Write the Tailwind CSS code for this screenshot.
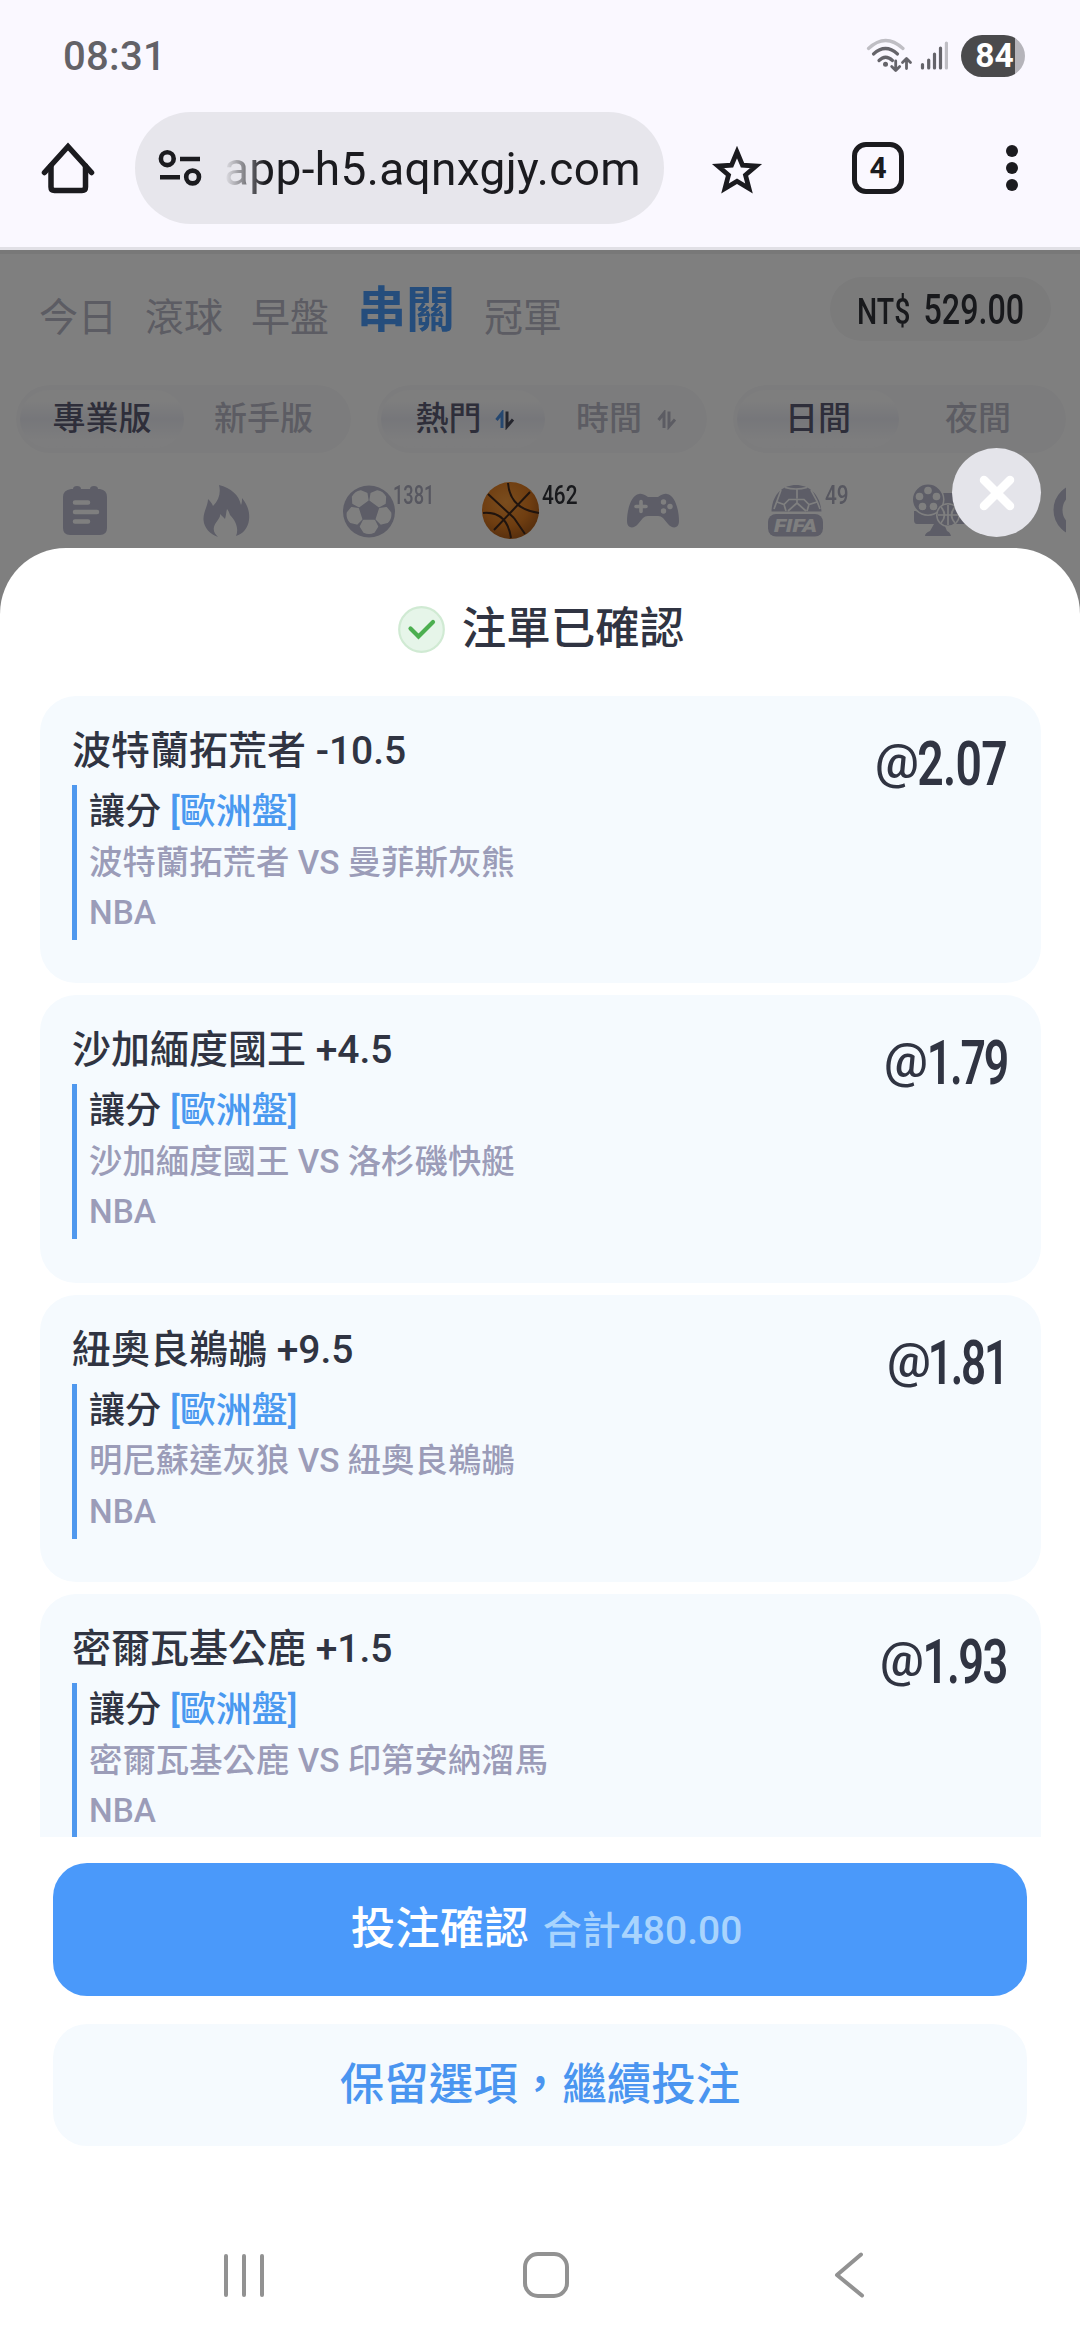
<!DOCTYPE html>
<html lang="zh-Hant">
<head>
<meta charset="utf-8">
<title>注單已確認</title>
<script src="https://cdn.jsdelivr.net/npm/@tailwindcss/browser@4"></script>
</head>
<body class="bg-white">
<div class="flex h-[2340px] w-[1080px] flex-col overflow-hidden bg-white font-['Roboto','Noto_Sans_CJK_TC',sans-serif] font-medium text-[#303442]">

  <!-- Status bar and browser toolbar -->
  <header class="flex h-[250px] flex-none flex-col border-b-3 border-[#e1e0e6] bg-[#faf8ff]">
    <div class="flex h-[112px] items-center justify-between pl-[63px] pr-[55px]">
      <span class="pt-[2px] text-[40px] leading-[42px] tracking-[0.3px] text-[#636267]">08:31</span>
      <div class="flex items-center">
        <svg class="h-[42px] w-[96px]" viewBox="864 35 96 42" fill="none" stroke="#65646a" stroke-width="3.2" stroke-linecap="round" stroke-linejoin="round">
          <path stroke="#bfbec4" d="M867.5 48.500Q884.500 32.500 902 48.500"/>
          <path d="M872.500 54Q884.500 43 896.500 54"/>
          <path d="M878 60.500Q884.500 54 891.500 60.500"/>
          <circle cx="884.500" cy="64.300" r="2.500" fill="#65646a" stroke="none"/>
          <path stroke-width="2.800" d="M894.700 61V70M890.700 66.500L894.700 70.500L898.700 66.500M905.500 68.500V59M901.500 62.500L905.500 58.500L909.500 62.500"/>
          <path d="M921.500 64.500V68M927.700 60V68M933.500 54V68M939.500 48V68"/>
          <path stroke="#bfbec4" d="M945.400 43V68"/>
        </svg>
        <div class="flex h-[42px] w-[64px] items-center justify-center rounded-full bg-linear-to-r from-[#4a4a4c] from-84% to-[#b5b4ba] to-84% pl-[3px] text-[33.500px] leading-none font-bold text-white">84</div>
      </div>
    </div>
    <div class="flex h-[112px] items-center">
      <svg class="ml-[40px] size-[56px]" viewBox="40 140 56 56" fill="none" stroke="#1b1b1f" stroke-width="5.500" stroke-linecap="round" stroke-linejoin="round">
        <path d="M44.500 172.500L68 146.500L91.500 172.500" stroke-linejoin="miter"/>
        <path d="M51 166V187Q51 190.500 54.500 190.500H82Q85.500 190.500 85.500 187V166"/>
      </svg>
      <div class="ml-[39px] flex h-[112px] w-[529px] items-center rounded-full bg-[#e7e6ec]">
        <svg class="ml-[21px] h-[40px] w-[48px] flex-none" viewBox="156 148 48 40" fill="none" stroke="#1b1b1f" stroke-width="4.600">
          <circle cx="167.300" cy="158.700" r="6.400"/><circle cx="192.600" cy="177" r="6.400"/><path d="M180 159H200M160 177.200H180"/>
        </svg>
        <span class="mt-[2px] ml-[20px] mask-l-from-90% mask-l-to-100% text-[46px] leading-[60px] font-normal tracking-[0.35px] text-[#1b1b1f]">app-h5.aqnxgjy.com</span>
      </div>
      <svg class="ml-[45px] h-[52px] w-[56px]" viewBox="709 143 56 52" fill="none" stroke="#1b1b1f" stroke-width="4.800" stroke-linejoin="miter">
        <path d="M737 153L742.500 166.200L756 167L745.500 176L749 189.500L737 182.300L725 189.500L728.500 176L718 167L731.500 166.200Z"/>
      </svg>
      <div class="ml-[87px] flex size-[52px] items-center justify-center rounded-[14px] border-[5.500px] border-[#1b1b1f] text-[30px] leading-none font-bold text-[#1b1b1f]">4</div>
      <div class="ml-[102px] flex flex-col gap-[5px]">
        <i class="size-[12px] rounded-full bg-[#1b1b1f]"></i><i class="size-[12px] rounded-full bg-[#1b1b1f]"></i><i class="size-[12px] rounded-full bg-[#1b1b1f]"></i>
      </div>
    </div>
  </header>

  <main class="relative flex-1">
    <!-- Page behind the sheet -->
    <div class="flex flex-col text-[#b8b8c6]">
      <div class="flex h-[135px] items-start">
        <nav class="ml-[39px] flex items-start gap-[28px] pt-[32px] text-[39px] leading-[72px] font-normal">
          <span>今日</span><span>滾球</span><span>早盤</span><span class="-mt-[7px] text-[49px] font-bold text-[#4a9af8]">串關</span><span class="pl-px">冠軍</span>
        </nav>
        <div class="mt-[27px] ml-[268px] flex h-[64px] w-[221px] flex-none items-center rounded-full bg-[#f6f6f7] pl-[27px] text-[#303238]">
          <div class="flex w-[167px] items-baseline justify-between">
            <span class="w-[54px] origin-left scale-x-77 text-[37px]">NT$</span>
            <span class="flex w-[98px] justify-end"><span class="origin-right scale-x-75 text-[43px] leading-[60px]">529.00</span></span>
          </div>
        </div>
      </div>
      <div class="flex h-[68px] gap-[26px] pl-[16px] text-[33px] leading-none">
        <div class="flex w-[335px] items-center rounded-full bg-[#f9f9fa] pl-[4px]">
          <div class="flex h-[58px] w-[164px] items-center justify-center rounded-full bg-linear-to-b from-[#fcfcfd] from-20% via-[#edeef5] to-[#fafafc] to-85% pb-[1px] text-[#5c5c74]">專業版</div>
          <div class="ml-[30px] pb-[1px]">新手版</div>
        </div>
        <div class="flex w-[330px] items-center rounded-full bg-[#f9f9fa] pl-[4px]">
          <div class="flex h-[58px] w-[164px] items-center justify-center gap-[13px] rounded-full bg-linear-to-b from-[#fcfcfd] from-20% via-[#edeef5] to-[#fafafc] to-85% pb-[1px] pl-[4px] text-[#5c5c74]">熱門
            <svg class="mt-[3px] h-[20px] w-[20px]" viewBox="0 0 20 20" fill="none" stroke-width="3"><path stroke="#4a8fe0" d="M1.500 10L7 3V18"/><path d="M12 1.500V16.500L18 9.500" stroke="#4a4c5c"/></svg>
          </div>
          <div class="ml-[31px] flex items-center gap-[15px] pb-[1px]">時間
            <svg class="mt-[3px] h-[20px] w-[20px]" viewBox="0 0 20 20" fill="none" stroke="#b8b8c6" stroke-width="3"><path d="M1.500 10L7 3V18M12 1.500V16.500L18 9.500"/></svg>
          </div>
        </div>
        <div class="flex w-[333px] items-center rounded-full bg-[#f9f9fa] pl-[4px]">
          <div class="flex h-[58px] w-[162px] items-center justify-center rounded-full bg-linear-to-b from-[#fcfcfd] from-20% via-[#edeef5] to-[#fafafc] to-85% pb-[1px] text-[#5c5c74]">日間</div>
          <div class="ml-[46px] pb-[1px]">夜間</div>
        </div>
      </div>
      <!-- Sport categories -->
      <div class="flex h-[100px] w-[1066px] items-start overflow-hidden pt-[29px] text-[26px]">
        <svg class="ml-[57px] size-[58px] flex-none" viewBox="0 0 58 58" fill="#babbcf"><path d="M14 7H16Q16 4 20 4Q24 4 24 7H33Q33 4 37 4Q41 4 41 7H43Q50 8 50 15V46Q50 53 43 53H13Q6 53 6 46V15Q6 8 14 7Z"/><path d="M18 20.500H31M18 30H40M18 39.500H31" stroke="#fff" stroke-width="4.500" stroke-linecap="round"/></svg>
        <svg class="ml-[83px] size-[58px] flex-none" viewBox="198 483 58 58" fill="#babbcf"><path d="M219 486C231 489 239 496 241 506C242 504 242 501 242 499C248 506 250 514 249 521C248 529 243 535 236 537C239 530 236 522 230 516C229 513 228 511 227 510C226 514 226 517 225 520C222 517 221 516 220 515C221 519 215 523 214 528C213 532 215 535 218 538C210 535 204 529 203.500 521C203 513 208 507 208 500C210 502 212 504 213 507C219 501 221 494 219 486Z"/></svg>
        <div class="ml-[84px] flex w-[142px] flex-none items-start">
          <svg class="size-[58px] flex-none" viewBox="-29 -29 58 58"><circle cy=".5" r="26" fill="#babbcf"/><g fill="#fff" stroke="#fff" stroke-width="1.500" stroke-linejoin="round"><path id="panel" d="M-5.500 9.500H5.500L8.500 15.500L5 21Q0 23.500-5 21L-8.500 15.500Z"/><use href="#panel" transform="rotate(72)"/><use href="#panel" transform="rotate(144)"/><use href="#panel" transform="rotate(216)"/><use href="#panel" transform="rotate(288)"/></g></svg>
          <span class="-mt-[3px] -ml-[5px] w-[40px] origin-left scale-x-70 leading-[32px] text-[#aeafc0]">1381</span>
        </div>
        <div class="flex w-[142px] flex-none items-start">
          <svg class="size-[58px] flex-none" viewBox="482 483 58 58">
            <defs><radialGradient id="orange" cx=".42" cy=".35" r=".7"><stop offset="0" stop-color="#f59a3c"/><stop offset=".6" stop-color="#df7c22"/><stop offset="1" stop-color="#a85a1a"/></radialGradient></defs>
            <circle cx="510.500" cy="511.500" r="28.500" fill="url(#orange)"/>
            <g fill="none" stroke="#40281c" stroke-width="2"><path d="M488 495L514 519M494 531L530 493M514 519L525 535M508 484Q510 510 539 514M483 514Q507 512 511 539"/></g>
          </svg>
          <span class="-mt-[3px] ml-[2px] w-[36px] origin-left scale-x-80 leading-[32px] text-[#303238]">462</span>
        </div>
        <svg class="h-[58px] w-[58px] flex-none" viewBox="624 483 58 58" fill="#babbcf"><path d="M639 495C643 494 646 497 648 498H658C660 497 663 494 667 495C675 496 679 511 679 522C679 530 672 530 668 525L663 519Q661 517 658 517H648Q645 517 643 519L638 525C634 530 627 530 627 522C627 511 631 496 639 495Z"/><path d="M636 507.500H646M641 502.500V512.500" stroke="#fff" stroke-width="3.600" stroke-linecap="round"/><g fill="#fff"><circle cx="663.500" cy="503" r="2.700"/><circle cx="670" cy="507.500" r="2.700"/><circle cx="663.500" cy="512" r="2.700"/></g></svg>
        <div class="ml-[83px] flex w-[146px] flex-none items-start">
          <svg class="size-[60px] flex-none" viewBox="765 482 60 60" fill="#babbcf">
            <path d="M771.500 511.500C772 494 783 485 796 485C809 485 820 494 821.500 511.500Z"/>
            <path d="M785 487.500Q796 490.500 807 487.500M797 489.500V498.500M781 490L777 501L774 509M811 490L817 501L820 509M777 502L784 504.500L789 499.500H804L809 504.500L817 502M784 504.500L786 511M809 504.500L807 511M797 499.500V503L788 511M797 503L806 511" fill="none" stroke="#fff" stroke-width="1.700"/>
            <rect x="768" y="514" width="55" height="22.500" rx="8"/>
            <text x="795.500" y="531.500" text-anchor="middle" textLength="43" lengthAdjust="spacingAndGlyphs" font-family="Roboto" font-size="19" font-weight="900" font-style="italic" fill="#fff">FIFA</text>
          </svg>
          <span class="-mt-[3px] origin-left scale-x-80 leading-[32px] text-[#aeafc0]">49</span>
        </div>
        <svg class="size-[58px] flex-none" viewBox="911 483 58 58" fill="#babbcf">
          <path d="M940 494H966Q968 494 968 498V521Q968 525 964 525H944L947 532Q950 533 951 537H925Q925 534 930 532L934 525H917Q914 525 914 521V512H940Z"/>
          <circle cx="928" cy="500.500" r="16.500" fill="#fff"/><circle cx="928" cy="500.500" r="15"/><g fill="#fff"><circle cx="928" cy="491.500" r="3.800"/><circle cx="936.500" cy="497.500" r="3.800"/><circle cx="933.500" cy="507.500" r="3.800"/><circle cx="922.500" cy="507.500" r="3.800"/><circle cx="919.500" cy="497.500" r="3.800"/></g>
          <circle cx="948" cy="516" r="12" fill="#fff"/><circle cx="948" cy="516" r="10.500"/><path d="M948 506V526M938 516H958M941 508Q948 516 941 524M955 508Q948 516 955 524" fill="none" stroke="#fff" stroke-width="1.700"/>
        </svg>
        <svg class="ml-[84px] size-[58px] flex-none" viewBox="1053 483 58 58" fill="none" stroke="#babbcf" stroke-width="9"><circle cx="1080" cy="511" r="22"/></svg>
      </div>
    </div>

    <div class="absolute inset-x-0 top-0 h-[400px] border-t-4 border-black/5 bg-black/50"></div>

    <button class="absolute top-[198px] left-[952px] z-10 flex size-[89px] items-center justify-center rounded-full bg-[#e4e4ea]">
      <svg class="size-[40px]" viewBox="0 0 40 40" stroke="#fff" stroke-width="8.500" stroke-linecap="round"><path d="M7 7L33 33M33 7L7 33"/></svg>
    </button>

    <!-- Bet confirmation sheet -->
    <section class="absolute inset-x-0 top-[298px] bottom-0 flex flex-col rounded-t-[66px] bg-white">
      <h1 class="flex h-[148px] flex-none items-center justify-center gap-[17px] pt-[15px] pl-[2px] text-[44.500px] leading-none font-medium">
        <svg class="size-[47px]" viewBox="0 0 47 47" fill="none"><circle cx="23.500" cy="23.500" r="22.300" fill="#e6f5e9" stroke="#d0ead3" stroke-width="2.200"/><path d="M12.500 22.500L20.500 30.500L35 16" stroke="#4caf50" stroke-width="4.200" stroke-linecap="round"/></svg>
        <span>注單已確認</span>
      </h1>

      <div class="flex h-[1141px] flex-none flex-col gap-[12px] overflow-hidden pr-[39px] pl-[40px]">
        <article class="flex h-[287.400px] flex-none justify-between rounded-[36px] bg-[#f5fafe] pt-[30px] pr-[34px] pl-[32px]">
          <div>
            <h2 class="text-[39px] leading-[50px]">波特蘭拓荒者 -10.5</h2>
            <div class="mt-[9px] h-[155px] border-l-[5px] border-[#4f98ee] pt-[2px] pl-[12px] text-[33.400px] leading-[50.500px] text-[#9b9cb8]">
              <p class="text-[36px] text-[#303442]">讓分 <span class="text-[#4a99f0]">[歐洲盤]</span></p><p>波特蘭拓荒者 VS 曼菲斯灰熊</p><p>NBA</p>
            </div>
          </div>
          <div class="-mt-[2px] flex items-baseline justify-end leading-[80px]"><span class="w-[44px] -translate-y-[7px] text-[49px]">@</span><span class="flex w-[88px] justify-end"><span class="origin-right scale-x-76 text-[61px] font-semibold tracking-[-1px]">2.07</span></span></div>
        </article>
        <article class="flex h-[287.400px] flex-none justify-between rounded-[36px] bg-[#f5fafe] pt-[30px] pr-[34px] pl-[32px]">
          <div>
            <h2 class="text-[39px] leading-[50px]">沙加緬度國王 +4.5</h2>
            <div class="mt-[9px] h-[155px] border-l-[5px] border-[#4f98ee] pt-[2px] pl-[12px] text-[33.400px] leading-[50.500px] text-[#9b9cb8]">
              <p class="text-[36px] text-[#303442]">讓分 <span class="text-[#4a99f0]">[歐洲盤]</span></p><p>沙加緬度國王 VS 洛杉磯快艇</p><p>NBA</p>
            </div>
          </div>
          <div class="-mt-[2px] flex items-baseline justify-end leading-[80px]"><span class="w-[44px] -translate-y-[7px] text-[49px]">@</span><span class="flex w-[79px] justify-end"><span class="origin-right scale-x-73 text-[61px] font-semibold tracking-[-3px]">1.79</span></span></div>
        </article>
        <article class="flex h-[287.400px] flex-none justify-between rounded-[36px] bg-[#f5fafe] pt-[30px] pr-[34px] pl-[32px]">
          <div>
            <h2 class="text-[39px] leading-[50px]">紐奧良鵜鶘 +9.5</h2>
            <div class="mt-[9px] h-[155px] border-l-[5px] border-[#4f98ee] pt-[2px] pl-[12px] text-[33.400px] leading-[50.500px] text-[#9b9cb8]">
              <p class="text-[36px] text-[#303442]">讓分 <span class="text-[#4a99f0]">[歐洲盤]</span></p><p>明尼蘇達灰狼 VS 紐奧良鵜鶘</p><p>NBA</p>
            </div>
          </div>
          <div class="-mt-[2px] flex items-baseline justify-end leading-[80px]"><span class="w-[44px] -translate-y-[7px] text-[49px]">@</span><span class="flex w-[76px] justify-end"><span class="origin-right scale-x-72 text-[61px] font-semibold tracking-[-3px]">1.81</span></span></div>
        </article>
        <article class="flex h-[287.400px] flex-none justify-between rounded-[36px] bg-[#f5fafe] pt-[30px] pr-[34px] pl-[32px]">
          <div>
            <h2 class="text-[39px] leading-[50px]">密爾瓦基公鹿 +1.5</h2>
            <div class="mt-[9px] h-[155px] border-l-[5px] border-[#4f98ee] pt-[2px] pl-[12px] text-[33.400px] leading-[50.500px] text-[#9b9cb8]">
              <p class="text-[36px] text-[#303442]">讓分 <span class="text-[#4a99f0]">[歐洲盤]</span></p><p>密爾瓦基公鹿 VS 印第安納溜馬</p><p>NBA</p>
            </div>
          </div>
          <div class="-mt-[2px] flex items-baseline justify-end leading-[80px]"><span class="w-[44px] -translate-y-[7px] text-[49px]">@</span><span class="flex w-[83px] justify-end"><span class="origin-right scale-x-74 text-[61px] font-semibold tracking-[-2px]">1.93</span></span></div>
        </article>
      </div>

      <div class="mt-[26px] flex flex-col gap-[28px] px-[53px]">
        <button class="flex h-[133px] items-baseline justify-center gap-[14px] rounded-[34px] bg-[#4a99fa] pl-[13px] text-[44.500px] leading-[133px] font-medium text-white">
          <span>投注確認</span><span class="text-[39px] text-[#a9d4fd]">合計480.00</span>
        </button>
        <button class="h-[122px] rounded-[34px] bg-[#f5fafe] text-[44.500px] leading-[119px] font-medium text-[#4a95f0]">保留選項，繼續投注</button>
      </div>

      <!-- System navigation -->
      <nav class="mt-auto flex h-[127px] items-start pt-[39px]">
        <div class="ml-[224px] flex h-[46px] items-center justify-between gap-[14px]"><i class="h-[43px] w-[4px] rounded-full bg-[#929292]"></i><i class="h-[43px] w-[4px] rounded-full bg-[#929292]"></i><i class="h-[43px] w-[4px] rounded-full bg-[#929292]"></i></div>
        <i class="ml-[259px] size-[46px] rounded-[15px] border-[4px] border-[#929292]"></i>
        <svg class="ml-[264px] h-[46px] w-[32px]" viewBox="0 0 32 46" fill="none" stroke="#929292" stroke-width="4" stroke-linecap="round" stroke-linejoin="round"><path d="M28 2.500L4 23L29 43.500"/></svg>
      </nav>
    </section>
  </main>
</div>
</body>
</html>
